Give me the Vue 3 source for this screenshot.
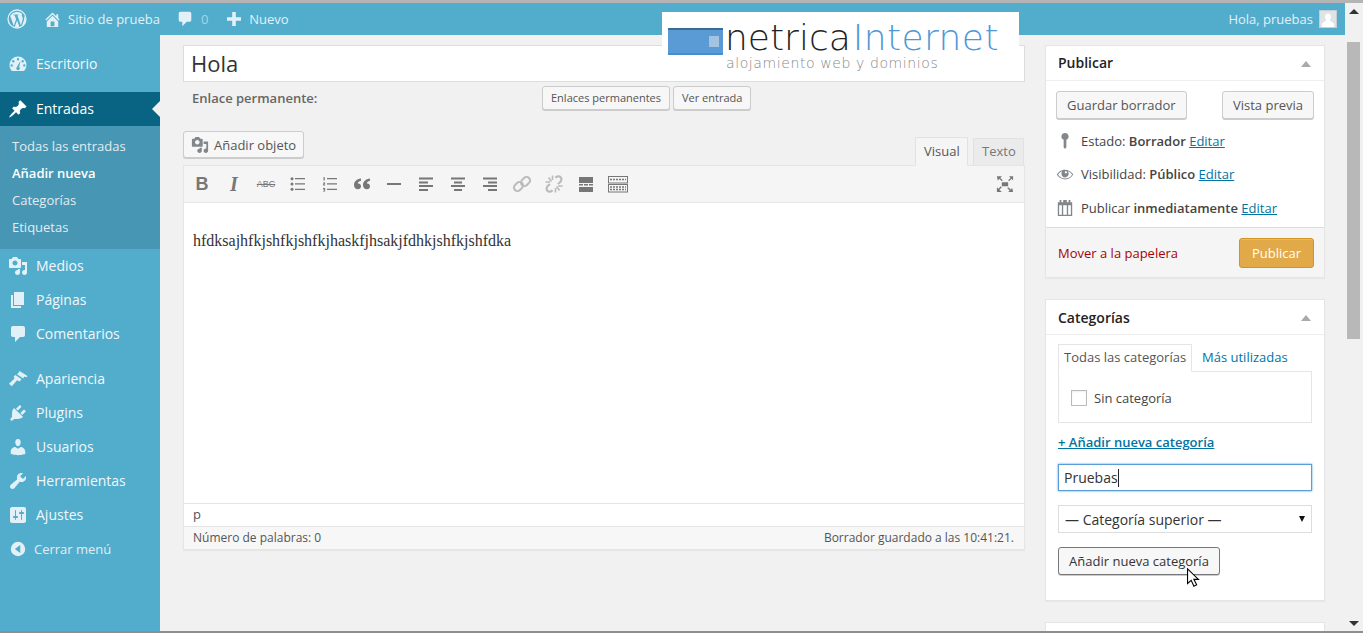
<script setup>
const menuA = [{ t: 'Medios', i: 'media' }, { t: 'Páginas', i: 'pages' }, { t: 'Comentarios', i: 'comment' }]
const menuB = [{ t: 'Apariencia', i: 'brush' }, { t: 'Plugins', i: 'plug' }, { t: 'Usuarios', i: 'user' }, { t: 'Herramientas', i: 'wrench' }, { t: 'Ajustes', i: 'sliders' }]
const subs = ['Todas las entradas', 'Añadir nueva', 'Categorías', 'Etiquetas']
const paths = {
  dash: 'M10 2.500a8.500 8.500 0 0 0-8.500 8.500c0 2.300.9 4.400 2.400 6h12.200a8.500 8.500 0 0 0 2.400-6A8.500 8.500 0 0 0 10 2.500zM10 4a1.200 1.200 0 1 1 0 2.400A1.200 1.200 0 0 1 10 4zM5.300 6a1.200 1.200 0 1 1 0 2.400 1.200 1.200 0 0 1 0-2.400zM14.700 6a1.200 1.200 0 1 1 0 2.400 1.200 1.200 0 0 1 0-2.400zM3.700 10.200a1.200 1.200 0 1 1 0 2.400 1.200 1.200 0 0 1 0-2.400zM16.300 10.200a1.200 1.200 0 1 1 0 2.400 1.200 1.200 0 0 1 0-2.400zM12.500 6.800l-1.300 6.100a1.800 1.800 0 1 1-2.300 0z',
  pin: 'M10.440 3.020l1.820-1.820 6.360 6.350-1.830 1.820c-1.050-.68-2.480-.57-3.410.36l-.75.75c-.92.93-1.040 2.350-.35 3.410l-1.830 1.820-2.410-2.410-2.800 2.790c-.42.42-3.380 2.710-3.800 2.290s1.860-3.390 2.280-3.810l2.790-2.790L4.100 9.360l1.830-1.820c1.050.69 2.480.57 3.400-.36l.75-.75c.93-.92 1.050-2.350.36-3.410z',
  media: 'M13 11V4c0-.55-.45-1-1-1h-1.670L9 1H5L3.670 3H2c-.55 0-1 .45-1 1v7c0 .55.45 1 1 1h10c.55 0 1-.45 1-1zM7 4.500c1.380 0 2.500 1.120 2.500 2.500S8.380 9.500 7 9.500 4.500 8.380 4.500 7 5.620 4.500 7 4.500zM14 6h5v10.500c0 1.380-1.120 2.500-2.500 2.500S14 17.880 14 16.500s1.120-2.500 2.500-2.500c.17 0 .34.02.5.05V9h-3V6zm-4 8.050V13h2v3.500c0 1.380-1.120 2.500-2.500 2.500S7 17.880 7 16.500 8.120 14 9.500 14c.17 0 .34.02.5.05z',
  pages: 'M6 15V2h10v13H6zm-1 1h8v2H3V5h2v11z',
  comment: 'M5 2h10c1.100 0 2 .9 2 2v7c0 1.100-.9 2-2 2h-3l-5 5v-5H5c-1.100 0-2-.9-2-2V4c0-1.100.9-2 2-2z',
  brush: 'M11.500 2l8 5-1 1.300-2.300-.7-.9 2-6.300-4.300 1.500-1.500zM7.500 6l6 4.200-2 2.300-2.400-1.300-5.300 6L1 14.700l5.500-5.200-.8-2z',
  plug: 'M13.110 4.360L9.870 7.600 8 5.730l3.240-3.240c.35-.34 1.050-.2 1.560.32.52.51.66 1.210.31 1.550zm-8 1.770l.91-1.120 9.010 9.010-1.190.84c-.71.71-2.630 1.160-3.820 1.160H6.140L4.900 17.260c-.59.59-1.540.59-2.120 0-.59-.58-.59-1.530 0-2.120l1.240-1.240v-3.880c0-1.130.4-3.130 1.090-3.890zm7.260 3.970l3.240-3.240c.34-.35 1.040-.21 1.550.31.52.51.66 1.210.31 1.550l-3.240 3.250z',
  user: 'M10 9.250c-2.270 0-2.730-3.440-2.730-3.440C7 4.020 7.820 2 9.970 2c2.160 0 2.980 2.020 2.710 3.810 0 0-.41 3.440-2.680 3.440zm0 2.570L12.720 10c2.390 0 4.520 2.330 4.520 4.530v2.490s-3.650 1.130-7.240 1.130c-3.650 0-7.240-1.130-7.240-1.130v-2.490c0-2.250 1.940-4.480 4.470-4.480z',
  wrench: 'M16.680 9.770c-1.340 1.340-3.300 1.670-4.950.99l-5.410 6.520c-.99.990-2.590.990-3.570 0-.99-.980-.99-2.580 0-3.570l6.520-5.420c-.68-1.650-.35-3.610.99-4.950 1.280-1.280 3.120-1.620 4.720-1.060l-2.890 2.890 2.820 2.820 2.890-2.890c.56 1.600.22 3.440-1.060 4.720z',
  sliders: 'M18 16V4c0-1.100-.9-2-2-2H4c-1.100 0-2 .9-2 2v12c0 1.100.9 2 2 2h12c1.100 0 2-.9 2-2zM8 11h1c.55 0 1 .45 1 1s-.45 1-1 1H8v1.500c0 .28-.22.5-.5.5s-.5-.22-.5-.5V13H6c-.55 0-1-.45-1-1s.45-1 1-1h1V5.500c0-.28.22-.5.5-.5s.5.22.5.5V11zm5-2h-1c-.55 0-1-.45-1-1s.45-1 1-1h1V5.500c0-.28.22-.5.5-.5s.5.22.5.5V7h1c.55 0 1 .45 1 1s-.45 1-1 1h-1v5.500c0 .28-.22.5-.5.5s-.5-.22-.5-.5V9z',
  home: 'M16 8.500l1.530 1.530-1.060 1.060L10 4.620l-6.470 6.470-1.060-1.060L10 2.500l4 4v-2h2v4zm-6-2.460l6 5.990V18H4v-5.970zM12 17v-5H8v5h4z',
  eye: 'M18.300 9.500C15 4.900 8.500 3.800 3.900 7.200c-1.200.9-2.200 2.100-3 3.400.2.400.5.800.8 1.200 3.300 4.600 9.600 5.600 14.200 2.400.9-.7 1.700-1.400 2.400-2.400.3-.4.500-.8.8-1.200-.2-.4-.4-.8-.8-1.100zm-8.200-2.300c.500-.500 1.300-.5 1.800 0s.5 1.300 0 1.800-1.300.5-1.800 0c-.5-.5-.5-1.300 0-1.800zm-.1 7.700c-3.100 0-6-1.600-7.700-4.200C3.500 9 5.100 7.800 7 7c-.7.800-1 1.700-1 2.700 0 2.200 1.700 4.100 4 4.100 2.200 0 4.100-1.700 4.100-4 0-1-.4-2-1-2.800 2 .8 3.600 2 4.800 3.800-1.900 2.800-4.800 4.300-7.900 4.300z'
}
const tb = ['b', 'i', 'abc', 'ul', 'ol', 'q', 'hr', 'al', 'ac', 'ar', 'link', 'unlink', 'more', 'kitchen']
</script>

<template>
  <div class="window">
    <div class="page">
      <header class="adminbar">
        <svg class="wp" viewBox="0 0 20 20"><circle cx="10" cy="10" r="9" fill="none" stroke="#e1f1f7" stroke-width="1.300"/><path d="M3.200 7l3.600 10 2.300-6.700L7.700 6.300H6.600V5.500h5v.8h-1.200l3.500 10.200 1.800-6.100c.5-1.800-.9-3-1-4.100 0-.6.300-1.100.8-1.300A8 8 0 0 0 3.500 6.500z M10.100 11.200l-2.400 6.700c1.500.4 3.100.4 4.700-.1zM16.800 6.500c.6 2 .4 4-.3 6l-2 5.200c2.900-1.900 4.400-5 3.900-8.300-.2-1-.9-2-1.600-2.900z" fill="#e1f1f7"/></svg>
        <svg class="home" viewBox="0 0 20 20"><path :d="paths.home" fill="#e1f1f7" fill-rule="evenodd"/></svg>
        <span class="site">Sitio de prueba</span>
        <svg class="bub" viewBox="0 0 20 20"><path :d="paths.comment" fill="#e1f1f7"/></svg>
        <span class="count">0</span>
        <svg class="plus" viewBox="0 0 16 16"><path d="M6.200 1h3.600v5.200H15v3.600H9.800V15H6.200V9.800H1V6.200h5.200z" fill="#e1f1f7"/></svg>
        <span class="new">Nuevo</span>
        <span class="hello">Hola, pruebas</span>
        <span class="avatar"><svg viewBox="0 0 16 16"><rect width="16" height="16" fill="#dfe3e5"/><path d="M8 2.500c2 0 3 1.500 3 3.200S10 9 10 9.500c0 .8 3.500 1.500 4 3.500v3H2v-3c.5-2 4-2.700 4-3.500C6 9 5 7.500 5 5.700S6 2.500 8 2.500z" fill="#fff"/></svg></span>
      </header>
      <div class="body">
        <nav class="side">
          <a class="item"><svg viewBox="0 0 20 20"><path :d="paths.dash" fill-rule="evenodd"/></svg><span>Escritorio</span></a>
          <a class="item active"><svg viewBox="0 0 20 20"><path :d="paths.pin"/></svg><span>Entradas</span></a>
          <ul class="sub">
            <li v-for="(s, n) in subs" :key="s" :class="{ cur: n === 1 }">{{ s }}</li>
          </ul>
          <a v-for="m in menuA" :key="m.t" class="item"><svg viewBox="0 0 20 20"><path :d="paths[m.i]" fill-rule="evenodd"/></svg><span>{{ m.t }}</span></a>
          <a v-for="(m, n) in menuB" :key="m.t" class="item" :class="{ gap: n === 0 }"><svg viewBox="0 0 20 20"><path :d="paths[m.i]" fill-rule="evenodd"/></svg><span>{{ m.t }}</span></a>
          <a class="collapse"><svg viewBox="0 0 20 20"><path d="M10 2a8 8 0 1 1 0 16 8 8 0 0 1 0-16zM12.500 5.500L6.500 10l6 4.500z" fill-rule="evenodd"/></svg><span>Cerrar menú</span></a>
        </nav>
        <main class="content">
          <section class="left">
            <div class="title">Hola</div>
            <div class="perma">
              <strong>Enlace permanente:</strong>
              <button class="btn small">Enlaces permanentes</button>
              <button class="btn small">Ver entrada</button>
            </div>
            <div class="edtop">
              <button class="btn media"><svg viewBox="0 0 20 20"><path :d="paths.media" fill-rule="evenodd"/></svg>Añadir objeto</button>
              <div class="tabs"><span class="tab on">Visual</span><span class="tab">Texto</span></div>
            </div>
            <div class="editor">
              <div class="toolbar">
                <span v-for="k in tb" :key="k" class="tool">
                  <span v-if="k === 'b'" class="g-b">B</span>
                  <span v-else-if="k === 'i'" class="g-i">I</span>
                  <span v-else-if="k === 'abc'" class="g-abc">ABC</span>
                  <svg v-else viewBox="0 0 20 20">
                    <g v-if="k === 'ul'"><path d="M7 4h10v1.300H7zM7 9.300h10v1.300H7zM7 14.700h10V16H7z"/><circle cx="4" cy="4.700" r="1.500"/><circle cx="4" cy="10" r="1.500"/><circle cx="4" cy="15.300" r="1.500"/></g>
                    <g v-else-if="k === 'ol'"><path d="M7 4h10v1.300H7zM7 9.300h10v1.300H7zM7 14.700h10V16H7zM3.500 3h1.200v3.500H3.500zM3 8.500h2.200v1L4 10.500h1.200v1H3v-1l1.200-1H3zM3 14h2.200v3.500H3v-.8h1.200v-.6H3v-.6h1.200v-.6H3z"/></g>
                    <path v-else-if="k === 'q'" d="M9 4.500v2.300C7 7.300 6 8.200 5.800 9.500 7.800 9.300 9 10.500 9 12.300 9 14 7.700 15.300 5.800 15.300 3.500 15.300 2 13.500 2 11 2 7.500 4.800 5 9 4.500zM18 4.500v2.300c-2 .5-3 1.400-3.200 2.700 2-.2 3.200 1 3.200 2.800 0 1.700-1.300 3-3.200 3-2.300 0-3.800-1.800-3.800-4.300 0-3.500 2.800-6 7-6.500z"/>
                    <path v-else-if="k === 'hr'" d="M3 9h14v2H3z"/>
                    <path v-else-if="k === 'al'" d="M3 3.500h14v2H3zM3 7.500h9v2H3zM3 11h14v2H3zM3 15h9v2H3z"/>
                    <path v-else-if="k === 'ac'" d="M3 3.500h14v2H3zM6 7.500h8v2H6zM3 11h14v2H3zM6 15h8v2H6z"/>
                    <path v-else-if="k === 'ar'" d="M3 3.500h14v2H3zM8 7.500h9v2H8zM3 11h14v2H3zM8 15h9v2H8z"/>
                    <g v-else-if="k === 'link'" fill="none" stroke="#bbb" stroke-width="2"><rect x="10" y="2.500" width="7" height="10" rx="3.500" transform="rotate(45 13.500 7.500)"/><rect x="3" y="7.500" width="7" height="10" rx="3.500" transform="rotate(45 6.500 12.500)"/></g>
                    <g v-else-if="k === 'unlink'" fill="none" stroke="#bbb"><path d="M11.500 3.800c1.500-1.800 3.700-2 5-.7 1.400 1.300 1.200 3.500-.5 5.100l-2 1.800M8.500 16.200c-1.500 1.800-3.700 2-5 .7-1.400-1.300-1.200-3.500.5-5.100l2-1.800" stroke-width="2.200"/><path d="M8.500 1.500v4.500M4.500 3.500L7.500 7.500M1.500 8H6M18.500 12H14M15.500 16.500L12.500 12.500M11.500 18.500V14" stroke-width="1.600"/></g>
                    <path v-else-if="k === 'more'" d="M3 3h14v6H3zM3 10h4v1.500H3zM8 10h4v1.500H8zM13 10h4v1.500h-4zM3 13h14v5H3z"/>
                    <g v-else-if="k === 'kitchen'" fill="none" stroke="#777"><rect x=".5" y="2.500" width="19" height="6.500"/><rect x=".5" y="10.500" width="19" height="7.500"/><path d="M2 5.500h16M2 13h16M2 15.500h16" stroke-width="1.600" stroke-dasharray="2 1"/></g>
                  </svg>
                </span>
                <svg class="full" viewBox="0 0 20 20"><path d="M6.500 8h7v4.500h-7zM1 1.500h5.500L4.800 3.200l2.700 2.700-1.100 1.100-2.700-2.700L2 6zM19 1.500V6l-1.700-1.700L14.600 7l-1.100-1.100 2.700-2.700-1.700-1.700zM1 19v-5.500l1.700 1.700 2.700-2.700 1.100 1.100-2.700 2.700L6.500 19zM19 19h-5.500l1.700-1.700-2.700-2.700 1.100-1.100 2.700 2.700 1.700-1.700z"/></svg>
              </div>
              <div class="text">hfdksajhfkjshfkjshfkjhaskfjhsakjfdhkjshfkjshfdka</div>
              <div class="path">p</div>
              <div class="status"><span>Número de palabras: 0</span><span>Borrador guardado a las 10:41:21.</span></div>
            </div>
          </section>
          <aside class="right">
            <section class="box">
              <h3>Publicar<i class="tri"></i></h3>
              <div class="pub">
                <div class="pubbtns"><button class="btn big">Guardar borrador</button><button class="btn big">Vista previa</button></div>
                <div class="row first"><svg viewBox="0 0 20 20"><path d="M10 1a4 4 0 0 1 1.500 7.700V17l-1.500 2-1.500-2V8.700A4 4 0 0 1 10 1z"/></svg><span>Estado: <b>Borrador</b> <a>Editar</a></span></div>
                <div class="row"><svg viewBox="0 0 20 20"><path :d="paths.eye" fill-rule="evenodd"/></svg><span>Visibilidad: <b>Público</b> <a>Editar</a></span></div>
                <div class="row"><svg viewBox="0 0 20 20"><path fill-rule="evenodd" d="M4 1h2v2.500h2V1h4v2.500h2V1h2v2.500h2V19H2V3.500h2zM3.500 7v10.500h3V7zM8 7v10.500h4V7zM13.500 7v10.500h3V7z"/></svg><span>Publicar <b>inmediatamente</b> <a>Editar</a></span></div>
              </div>
              <footer class="pubfoot"><a class="trash">Mover a la papelera</a><button class="primary">Publicar</button></footer>
            </section>
            <section class="box">
              <h3>Categorías<i class="tri"></i></h3>
              <div class="cats">
                <div class="cattabs"><span class="cattab on">Todas las categorías</span><a class="cattab">Más utilizadas</a></div>
                <div class="catpanel"><i class="check"></i>Sin categoría</div>
                <a class="addlink">+ Añadir nueva categoría</a>
                <div class="input">Pruebas<i class="caret"></i></div>
                <div class="select">— Categoría superior —<i class="sel-arrow"></i></div>
                <button class="btn addbtn">Añadir nueva categoría</button>
              </div>
            </section>
            <section class="box stub"></section>
          </aside>
        </main>
      </div>
    </div>
    <div class="scroll"><i class="up"></i><i class="thumb"></i><i class="down"></i></div>
    <div class="logo">
      <span class="logomark"><i></i></span>
      <div class="logotext">
        <div class="l1"><span>netrica</span><em>Internet</em></div>
        <div class="l2">alojamiento web y dominios</div>
      </div>
    </div>
    <svg class="cursor" viewBox="0 0 14 22"><path d="M1 1v16l4-3.500L8 20l3-1.500-3-6h5z" fill="#fff" stroke="#000" stroke-width="1.200"/></svg>
  </div>
</template>

<style>
html, body { margin: 0; height: 100%; overflow: hidden; background: #f1f1f1; }
</style>

<style scoped>
* { box-sizing: border-box; }
.window { position: relative; display: flex; width: 1363px; height: 633px; overflow: hidden; border-top: 3px solid #b4b4b4; border-bottom: 2px solid #8e8e8e; font: 13px/18px "Open Sans", sans-serif; color: #444; background: #f1f1f1; }
.page { width: 1345px; display: flex; flex-direction: column; }
.adminbar { flex: none; height: 32px; background: #52accc; color: #e1f1f7; display: flex; align-items: center; }
.wp { width: 20px; height: 20px; margin-left: 7px; flex: none; }
.home { width: 19px; height: 19px; margin-left: 16px; }
.site { margin-left: 6px; }
.bub { width: 18px; height: 18px; margin-left: 16px; }
.count { margin-left: 7px; color: #a9d6e6; }
.plus { width: 16px; height: 16px; margin-left: 18px; }
.new { margin-left: 7px; }
.hello { margin-left: auto; }
.avatar { width: 18px; height: 18px; margin: 0 8px 0 6px; border: 1px solid #c7cdd0; display: block; }
.avatar svg { width: 16px; height: 16px; display: block; }
.body { flex: 1; display: flex; min-height: 0; }
.side { flex: none; width: 160px; background: #52accc; padding-top: 12px; }
.item { height: 34px; display: flex; align-items: center; color: #f0f8fb; font-size: 14px; position: relative; }
.item svg { width: 20px; height: 20px; margin-left: 8px; fill: #e1f1f7; flex: none; }
.item span { margin-left: 8px; }
.item.active { background: #096484; margin-top: 11px; color: #fff; }
.item.active svg { fill: #fff; }
.item.active::after { content: ""; position: absolute; right: 0; top: 9px; border: 8px solid transparent; border-right-color: #f1f1f1; border-left-width: 0; }
.item.gap { margin-top: 11px; }
.sub { list-style: none; margin: 0; height: 123px; padding: 7px 0 0 12px; background: #4796b3; color: #e2ecf1; font-size: 13px; }
.sub li { height: 27px; line-height: 26px; }
.sub li.cur { color: #fff; font-weight: 600; }
.collapse { height: 34px; display: flex; align-items: center; color: #e2ecf1; }
.collapse svg { width: 18px; height: 18px; fill: #e1f1f7; margin-left: 9px; }
.collapse span { margin-left: 7px; }
.content { flex: 1; display: flex; gap: 20px; padding: 10px 0 0 23px; min-width: 0; }
.left { width: 842px; flex: none; }
.title { height: 37px; background: #fff; border: 1px solid #ddd; padding-left: 7px; font-size: 22px; line-height: 35px; color: #333; }
.btn { display: block; font: 13px/18px "Open Sans", sans-serif; color: #555; background: #f7f7f7; border: 1px solid #ccc; border-radius: 3px; box-shadow: 0 1px 0 #ccc; padding: 0; }
.perma { display: flex; align-items: center; margin-top: 4px; height: 24px; padding-left: 9px; }
.perma strong { width: 350px; font-weight: 600; color: #666; }
.btn.small { font-size: 11px; height: 24px; padding: 0 8px; margin-right: 3px; }
.edtop { margin-top: 22px; height: 34px; display: flex; align-items: flex-start; justify-content: space-between; }
.btn.media { height: 27px; width: 121px; display: flex; align-items: center; padding-left: 7px; margin-top: -1px; }
.btn.media svg { width: 18px; height: 18px; fill: #82878c; margin-right: 5px; flex: none; }
.tabs { display: flex; gap: 5px; margin-top: 5px; margin-right: 1px; align-items: flex-start; }
.tab { display: block; height: 27px; padding: 0 8px; line-height: 25px; background: #ebebeb; border: 1px solid #e2e2e2; border-bottom: 0; color: #777; margin-top: 1px; width: 51px; }
.tab.on { height: 29px; width: 53px; line-height: 27px; background: #f5f5f5; color: #555; margin-top: 0; border-bottom: 1px solid #f5f5f5; position: relative; z-index: 1; }
.editor { border: 1px solid #e5e5e5; margin-top: -1px; background: #fff; box-shadow: 0 1px 1px rgba(0,0,0,.04); height: 385px; }
.toolbar { height: 37px; background: #f5f5f5; border-bottom: 1px solid #e5e5e5; display: flex; align-items: center; padding-left: 2px; padding-right: 10px; }
.tool { width: 32px; height: 20px; display: flex; justify-content: center; align-items: center; color: #777; }
.tool svg { width: 20px; height: 20px; fill: #777; }
.g-b { font: 700 18px/20px "Liberation Sans", sans-serif; }
.g-i { font: italic 700 20px/20px "Liberation Serif", serif; }
.g-abc { font: 9px/20px "Liberation Sans", sans-serif; text-decoration: line-through; }
.full { width: 18px; height: 18px; margin-left: auto; fill: #777; }
.text { height: 300px; padding: 28px 9px; font: 16px/20px "Liberation Serif", serif; color: #333; }
.path { height: 23px; padding-left: 9px; line-height: 20px; border-top: 1px solid #e5e5e5; color: #555; }
.status { height: 23px; background: #f7f7f7; border-top: 1px solid #e5e5e5; padding: 0 10px 0 9px; display: flex; justify-content: space-between; align-items: center; font-size: 12px; color: #555; }
.right { width: 280px; flex: none; }
.box { background: #fff; border: 1px solid #e5e5e5; box-shadow: 0 1px 1px rgba(0,0,0,.04); margin-bottom: 21px; }
.box h3 { margin: 0; height: 35px; border-bottom: 1px solid #eee; padding-left: 12px; font-size: 14px; line-height: 34px; font-weight: 600; color: #222; position: relative; }
.box + .box h3 { line-height: 36px; }
.tri { position: absolute; right: 13px; top: 15px; border: 5px solid transparent; border-top: 0; border-bottom: 6px solid #aaa; }
.pub { height: 146px; padding: 10px 10px 0; }
.pubbtns { display: flex; justify-content: space-between; margin-bottom: 9px; }
.btn.big { height: 28px; padding: 0 10px; color: #555; }
.row { display: flex; align-items: center; height: 34px; }
.row.first { height: 26px; margin-bottom: 3px; }
.row svg { width: 18px; height: 18px; fill: #82878c; flex: none; margin-right: 7px; }
.row a { color: #0074a2; text-decoration: underline; }
.row b { font-weight: 600; }
.pubfoot { height: 50px; background: #f5f5f5; border-top: 1px solid #ddd; display: flex; justify-content: space-between; align-items: center; padding: 0 10px 0 12px; }
.trash { color: #a00; }
.primary { width: 75px; height: 30px; background: #e1a948; border: 1px solid #d39323; border-radius: 3px; color: #fff; font: 13px "Open Sans", sans-serif; padding: 0; box-shadow: inset 0 1px 0 rgba(255,255,255,.2); }
.cats { height: 265px; padding: 9px 12px 0; }
.cattabs { display: flex; height: 28px; position: relative; z-index: 1; }
.cattab { display: block; line-height: 27px; padding: 0 5px; color: #0074a2; margin-left: 5px; white-space: nowrap; }
.cattab.on { margin-left: 0; line-height: 25px; color: #555; background: #fff; border: 1px solid #e5e5e5; border-bottom: 1px solid #fff; width: 134px; height: 28px; }
.catpanel { height: 52px; margin-top: -1px; border: 1px solid #e5e5e5; display: flex; align-items: center; padding-left: 12px; padding-top: 2px; width: 254px; }
.check { width: 16px; height: 16px; border: 1px solid #bbb; margin-right: 7px; box-shadow: inset 0 1px 2px rgba(0,0,0,.07); display: block; }
.addlink { display: block; margin-top: 10px; font-weight: 600; text-decoration: underline; color: #0074a2; }
.input { margin-top: 13px; width: 254px; height: 27px; border: 1px solid #5b9dd9; box-shadow: 0 0 2px rgba(30,140,190,.8); padding-left: 5px; line-height: 26px; font-size: 14px; color: #333; display: flex; align-items: center; }
.caret { width: 1px; height: 18px; background: #222; display: block; }
.select { margin-top: 14px; width: 254px; height: 28px; border: 1px solid #ddd; background: #fff; padding-left: 6px; font-size: 14px; line-height: 27px; color: #333; position: relative; }
.sel-arrow { position: absolute; right: 6px; top: 10px; border: 3px solid transparent; border-bottom: 0; border-top: 6px solid #111; }
.btn.addbtn { margin-top: 14px; width: 162px; height: 28px; border-color: #777; color: #333; }
.stub { height: 40px; margin: 0; }
.scroll { width: 18px; background: #f1f1f1; position: relative; flex: none; }
.up { position: absolute; left: 4px; top: 6px; border: 5px solid transparent; border-top: 0; border-bottom: 5px solid #333; }
.thumb { position: absolute; left: 2px; top: 39px; width: 13px; height: 297px; background: #b8b8b8; display: block; }
.down { position: absolute; left: 4px; bottom: 5px; border: 5px solid transparent; border-bottom: 0; border-top: 5px solid #333; }
.logo { position: absolute; left: 662px; top: 9px; width: 357px; height: 69px; background: #fff; display: flex; padding: 8px 0 0 6px; }
.logomark { width: 55px; height: 27px; margin-top: 8px; background: #5b9bd5; border-top: 2px solid #3a6c94; border-bottom: 2px solid #3f90d4; position: relative; display: block; flex: none; }
.logomark i { position: absolute; right: 4px; top: 6px; width: 10px; height: 11px; background: #a3c3e2; }
.logotext { margin-left: 3px; white-space: nowrap; }
.l1 { font: 200 36px/36px "DejaVu Sans", sans-serif; color: #222; margin-left: -1px; }
.l1 em { font-style: normal; color: #4f98d6; margin-left: 2px; letter-spacing: .4px; }
.l2 { font: 200 14px/16px "DejaVu Sans", sans-serif; color: #888; letter-spacing: .6px; margin-top: -1px; }
.cursor { position: absolute; left: 1186px; top: 565px; width: 14px; height: 20px; }
</style>
